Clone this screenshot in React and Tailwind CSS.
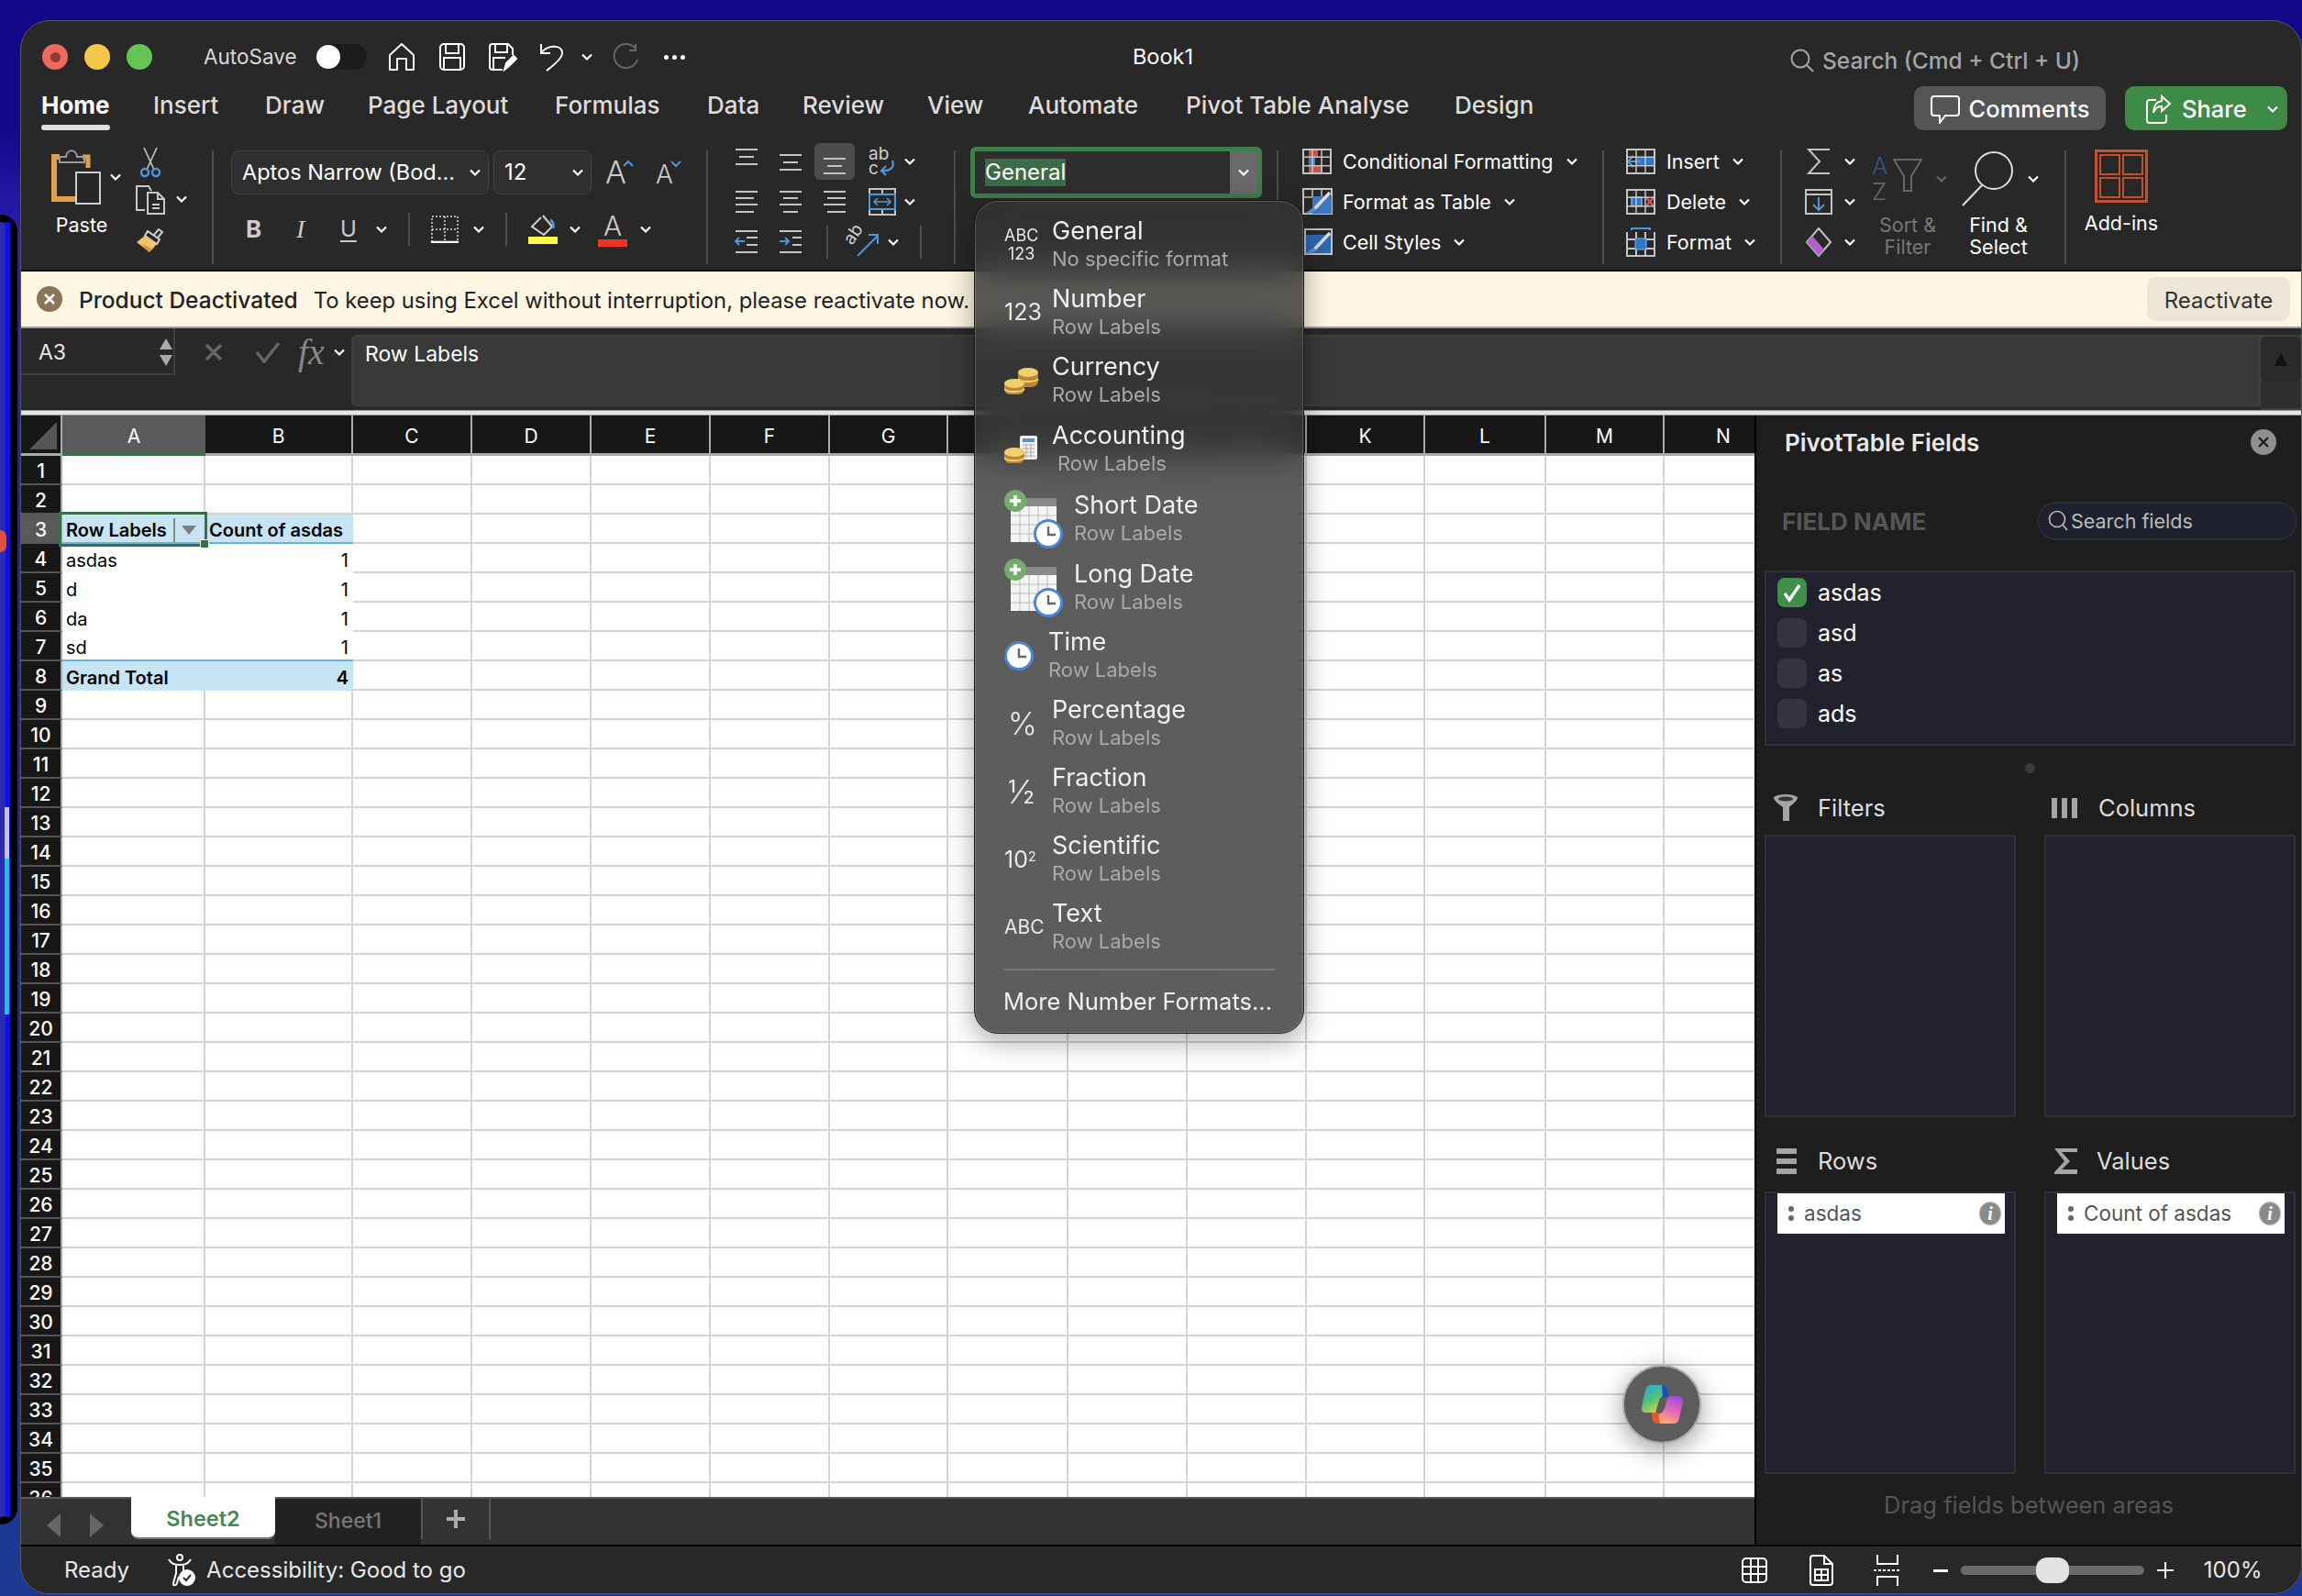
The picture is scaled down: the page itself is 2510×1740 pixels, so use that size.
import React from "react";

const Chev = ({ className = "text-white" }) => (
  <svg width="16" height="16" viewBox="0 0 16 16" className={`shrink-0 ${className}`}>
    <path d="M3 5.5 8 10.5 13 5.5" fill="none" stroke="currentColor" strokeWidth="2.2" />
  </svg>
);

const G = "#c4c4c4";
const B = "#4f97d8";

const Lines = ({ rows, hl }) => (
  <svg width="28" height="28" viewBox="0 0 28 28">
    {rows.map(([x1, x2, y], i) => (
      <line key={i} x1={x1} x2={x2} y1={y} y2={y} stroke={G} strokeWidth="2" />
    ))}
    {hl}
  </svg>
);

const Home = () => (
  <svg width="30" height="30" viewBox="0 0 30 30" fill="none" stroke="#fff" strokeWidth="2">
    <path d="M2 29V13L15 1l13 12v16h-8V17H10v12z" strokeLinejoin="round" />
  </svg>
);
const Save = () => (
  <svg width="30" height="30" viewBox="0 0 30 30" fill="none" stroke="#fff" strokeWidth="2">
    <rect x="2" y="1" width="26" height="28" rx="4" />
    <path d="M8 1v10h14V1M6 29V16h18v13" />
  </svg>
);
const SaveAs = () => (
  <svg width="32" height="32" viewBox="0 0 32 32" fill="none" stroke="#fff" strokeWidth="2">
    <path d="M16 30H5a3 3 0 0 1-3-3V5a3 3 0 0 1 3-3h17l5 5v7" />
    <path d="M8 2v9h13V2M6 30V17h13" />
    <path d="M18 30l2-7 8-8 3 3-8 8z" fill="#fff" />
  </svg>
);
const Undo = () => (
  <svg width="28" height="32" viewBox="0 0 28 32" fill="none" stroke="#fff" strokeWidth="2">
    <path d="M2 2v10h10M2 12C8 3 24 2 25 11c1 7-12 16-17 20" />
  </svg>
);
const Redo = () => (
  <svg width="30" height="30" viewBox="0 0 30 30" fill="none" stroke="#666" strokeWidth="2">
    <path d="M24 5A13 13 0 1 0 27 18M25 1v7h-7" />
  </svg>
);

const PasteIcon = () => (
  <svg width="54" height="60" viewBox="0 0 54 60" fill="none">
    <path d="M9 8H3v46h25" stroke="#e0a047" strokeWidth="6" />
    <path d="M34 8h6v12" stroke="#e0a047" strokeWidth="5" />
    <path d="M9 14V8h7c1-9 11-9 12 0h8v6z" stroke="#9a9a9a" strokeWidth="2" />
    <rect x="27" y="25" width="26" height="34" stroke="#cfcfcf" strokeWidth="2" fill="#272727" />
  </svg>
);
const Cut = () => (
  <svg width="22" height="34" viewBox="0 0 22 34" fill="none">
    <path d="M4 1l11 24M18 1L7 25" stroke="#bcbcbc" strokeWidth="1.8" />
    <circle cx="5" cy="28" r="4" stroke={B} strokeWidth="2.4" />
    <circle cx="17" cy="28" r="4" stroke={B} strokeWidth="2.4" />
  </svg>
);
const Copy = () => (
  <svg width="32" height="32" viewBox="0 0 32 32" fill="none" stroke="#c9c9c9" strokeWidth="2">
    <path d="M10 27H1V1h13l3 5" />
    <path d="M13 8h11l7 7v16H13z" fill="#272727" />
    <path d="M24 8v7h7M18 21h8M18 25h8" />
  </svg>
);
const Painter = () => (
  <svg width="32" height="32" viewBox="0 0 32 32" fill="none">
    <path d="M20 11l5-6 4 3-5 6" stroke="#cfcfcf" strokeWidth="2" />
    <path d="M13 7l13 9-3 5-13-9z" stroke="#cfcfcf" strokeWidth="2" />
    <path d="M10 12l13 9-8 9L1 19z" fill="#f0c567" />
    <path d="M5 20l12 6-2 4z" fill="#d8913a" />
  </svg>
);
const BorderIcon = () => (
  <svg width="30" height="30" viewBox="0 0 30 30" fill="none">
    <rect x="1" y="1" width="28" height="28" stroke="#ddd" strokeWidth="1.5" strokeDasharray="2 2" />
    <path d="M15 1v28M1 15h28" stroke="#ddd" strokeWidth="1.5" strokeDasharray="2 2" />
    <path d="M0 29h30" stroke="#fff" strokeWidth="2.5" />
  </svg>
);
const Fill = () => (
  <svg width="32" height="32" viewBox="0 0 32 32" fill="none">
    <path d="M16 2l10 12-9 9L4 14l10-10" stroke="#cfcfcf" strokeWidth="2" transform="translate(0 -1)" />
    <path d="M24 6c3 1 4 5 3 9" stroke={B} strokeWidth="3" />
    <rect y="24" width="32" height="8" fill="#fdfb47" />
  </svg>
);
const WrapIcon = () => (
  <svg width="30" height="32" viewBox="0 0 30 32" fill="none" className="overflow-visible">
    <text x="0" y="14" fontSize="19" fill="#cfcfcf" fontFamily="Inter">ab</text>
    <text x="0" y="30" fontSize="19" fill="#cfcfcf" fontFamily="Inter">c</text>
    <path d="M26 15c3 8-3 12-12 11M19 21l-5 5 5 5" stroke={B} strokeWidth="2.2" />
  </svg>
);
const MergeIcon = () => (
  <svg width="30" height="30" viewBox="0 0 30 30" fill="none">
    <rect x="1" y="1" width="28" height="28" stroke={G} strokeWidth="2" />
    <path d="M15 1v28" stroke={G} strokeWidth="2" />
    <rect x="1" y="7" width="28" height="16" stroke={B} strokeWidth="2" fill="#272727" />
    <path d="M6 15h18M10 11l-4 4 4 4M20 11l4 4-4 4" stroke={B} strokeWidth="1.6" />
  </svg>
);
const Orient = () => (
  <svg width="34" height="32" viewBox="0 0 34 32" fill="none" className="overflow-visible">
    <text x="0" y="0" fontSize="19" fill="#cfcfcf" fontFamily="Inter" transform="translate(4 20) rotate(-55)">ab</text>
    <path d="M10 31L32 9M22 8h10v10" stroke={B} strokeWidth="2" />
  </svg>
);
const SheetGrid = ({ children, w = 32, h = 28 }) => (
  <svg width={w} height={h} viewBox={`0 0 ${w} ${h}`} fill="none" className="shrink-0">
    {children}
    <rect x="1" y="1" width={w - 2} height={h - 2} stroke={G} strokeWidth="2" />
    <path d={`M11 1V${h - 1}M21 1V${h - 1}M1 ${h / 3}H${w - 1}M1 ${(2 * h) / 3}H${w - 1}`} stroke={G} strokeWidth="1.5" />
  </svg>
);
const CondIcon = () => (
  <SheetGrid>
    <rect x="7" y="1" width="10" height="8" fill="#c9504b" />
    <rect x="7" y="9" width="7" height="10" fill="#3d80c4" />
    <rect x="7" y="19" width="15" height="8" fill="#c9504b" />
  </SheetGrid>
);
const Brush = () => (
  <g>
    <path d="M12 24L30 5" stroke="#ddd" strokeWidth="3.5" />
    <path d="M13 21c-4 1-6 5-10 6 4 1 10 0 12-3z" fill={B} />
  </g>
);
const TableIcon = () => (
  <svg width="34" height="30" viewBox="0 0 34 30" fill="none" className="shrink-0">
    <rect x="1" y="1" width="31" height="27" stroke={G} strokeWidth="2" />
    <path d="M11 1v9M21 1v9M1 10h31" stroke={G} strokeWidth="1.5" />
    <rect x="11" y="9" width="21" height="19" fill="#3f78c2" />
    <Brush />
  </svg>
);
const StyleIcon = () => (
  <svg width="34" height="30" viewBox="0 0 34 30" fill="none" className="shrink-0">
    <rect x="3" y="1" width="29" height="27" stroke={G} strokeWidth="2" />
    <rect x="4" y="7" width="27" height="20" fill="#2f69b5" />
    <Brush />
  </svg>
);
const InsertCell = () => (
  <SheetGrid>
    <rect x="11" y="9" width="21" height="10" fill="#2f78c8" />
    <path d="M16 14H2M8 8l-6 6 6 6" stroke={B} strokeWidth="2.2" />
  </SheetGrid>
);
const DeleteCell = () => (
  <SheetGrid>
    <rect x="6" y="9" width="11" height="10" fill="#2f78c8" stroke="#7fb4e6" strokeWidth="1.5" />
    <path d="M21 8l10 12M31 8L21 20" stroke="#d9534f" strokeWidth="2.4" />
  </SheetGrid>
);
const FormatCell = () => (
  <svg width="32" height="32" viewBox="0 0 32 32" fill="none" className="shrink-0">
    <path d="M6 1h20M6 0v3M26 0v3" stroke={B} strokeWidth="2" />
    <path d="M1 5v26h30V5M11 5v26M21 5v26M1 13h30M1 23h30" stroke={G} strokeWidth="2" />
    <rect x="10" y="12" width="12" height="12" fill="#2f78c8" stroke="#7fb4e6" />
  </svg>
);
const SumIcon = () => (
  <svg width="26" height="28" viewBox="0 0 26 28" fill="none">
    <path d="M25 1H2l12 13L2 27h23" stroke={G} strokeWidth="2" />
  </svg>
);
const FillDown = () => (
  <svg width="30" height="28" viewBox="0 0 30 28" fill="none">
    <rect x="1" y="1" width="28" height="26" stroke={G} strokeWidth="2" />
    <path d="M1 6h28" stroke={G} strokeWidth="2" />
    <path d="M15 9v14M9 17l6 6 6-6" stroke={B} strokeWidth="2" />
  </svg>
);
const Eraser = () => (
  <svg width="30" height="32" viewBox="0 0 30 32" fill="none">
    <path d="M15 1l13 15-13 15L2 16z" stroke={G} strokeWidth="2" />
    <path d="M8 9l13 15-6 7L2 16z" fill="#b062c4" />
  </svg>
);
const SortIcon = () => (
  <svg width="56" height="54" viewBox="0 0 56 54" fill="none" className="overflow-visible">
    <text x="0" y="22" fontSize="26" fill="#34567e" fontFamily="Inter" fontWeight="300">A</text>
    <text x="0" y="50" fontSize="26" fill="#666" fontFamily="Inter" fontWeight="300">Z</text>
    <path d="M24 6h30L43 24v16h-8V24z" stroke="#666" strokeWidth="2" />
  </svg>
);
const FindIcon = () => (
  <svg width="56" height="60" viewBox="0 0 56 60" fill="none" className="shrink-0">
    <circle cx="35" cy="21" r="20" stroke="#ddd" strokeWidth="2" />
    <path d="M22 37L1 59" stroke="#ddd" strokeWidth="2" />
  </svg>
);
const AddIns = () => (
  <svg width="58" height="58" viewBox="0 0 58 58" fill="none" className="shrink-0">
    <rect x="1.5" y="1.5" width="55" height="55" stroke="#c4502c" strokeWidth="3" />
    <path d="M6 6h21v21H6zM31 6h21v21H31zM6 31h21v21H6zM31 31h21v21H31z" stroke="#c4502c" strokeWidth="2" />
  </svg>
);
const CommentIcon = () => (
  <svg width="32" height="32" viewBox="0 0 32 32" fill="none" stroke="#fff" strokeWidth="2">
    <path d="M4 2h24a3 3 0 0 1 3 3v15a3 3 0 0 1-3 3H16l-6 8v-8H4a3 3 0 0 1-3-3V5a3 3 0 0 1 3-3z" />
  </svg>
);
const ShareIcon = () => (
  <svg width="30" height="32" viewBox="0 0 30 32" fill="none" stroke="#fff" strokeWidth="2">
    <path d="M12 6H5a3 3 0 0 0-3 3v19a3 3 0 0 0 3 3h15a3 3 0 0 0 3-3v-6" />
    <path d="M18 2l9 8-9 8v-5c-5 0-8 3-9 7 0-7 3-12 9-13z" />
  </svg>
);

const Sep = ({ className = "h-[124px] mt-[14px]" }) => <div className={`w-[2px] shrink-0 bg-[#4c4c4c] ${className}`} />;

const alignRows = [
  [
    [[2, 26, 1], [6, 22, 9], [2, 26, 17]],
    [[2, 26, 7], [6, 22, 15], [2, 26, 23]],
    [[2, 26, 11], [6, 22, 19], [2, 26, 27]],
  ],
  [
    [[2, 26, 3], [2, 22, 10], [2, 26, 17], [2, 22, 25]],
    [[2, 26, 3], [6, 22, 10], [2, 26, 17], [6, 22, 25]],
    [[2, 26, 3], [6, 26, 10], [2, 26, 17], [6, 26, 25]],
  ],
];

function Ribbon() {
  return (
    <div className="flex h-[144px] shrink-0">
      <div className="flex w-[208px] shrink-0 pt-[13px] pl-[33px]">
        <div className="flex w-[54px] flex-col items-center">
          <PasteIcon />
          <span className="ml-[12px] mt-[8px] whitespace-nowrap text-[21.5px] leading-[28px] text-white">Paste</span>
        </div>
        <div className="ml-[8px] mt-[22px]"><Chev /></div>
        <div className="ml-[14px] -mt-[3px] flex flex-col">
          <div className="flex h-[42px] w-[32px] justify-center"><Cut /></div>
          <div className="flex h-[43px] items-start"><Copy /><div className="ml-[10px] mt-[7px]"><Chev /></div></div>
          <Painter />
        </div>
      </div>
      <Sep />
      <div className="w-[537px] shrink-0 pl-[19px] pt-[14px]">
        <div className="flex h-[48px] items-center">
          <div className="flex h-[48px] w-[281px] items-center justify-between rounded-[8px] border border-[#444] bg-[#2f2f2f] pl-[11px] pr-[6px] text-[23.5px] text-white">
            <span className="whitespace-nowrap">Aptos Narrow (Bod...</span>
            <Chev />
          </div>
          <div className="ml-[5px] flex h-[48px] w-[107px] items-center justify-between rounded-[8px] border border-[#444] bg-[#2f2f2f] pl-[11px] pr-[6px] text-[24px] text-white">
            <span>12</span>
            <Chev />
          </div>
          <svg width="32" height="30" viewBox="0 0 32 30" className="ml-[15px] overflow-visible" fill="none">
            <text x="0" y="27" fontSize="34" fontWeight="300" fill="#ccc" fontFamily="Inter">A</text>
            <path d="M20 8l5-5 5 5" stroke={B} strokeWidth="2" />
          </svg>
          <svg width="28" height="30" viewBox="0 0 28 30" className="ml-[23px] overflow-visible" fill="none">
            <text x="0" y="27" fontSize="28" fontWeight="300" fill="#ccc" fontFamily="Inter">A</text>
            <path d="M17 3l5 5 5-5" stroke={B} strokeWidth="2" />
          </svg>
        </div>
        <div className="mt-[16px] flex h-[44px] items-center pl-[16px] text-[#ccc]">
          <span className="w-[55px] text-[26px] font-bold leading-none">B</span>
          <span className="w-[48px] font-['Liberation_Serif',serif] text-[28px] italic leading-none">I</span>
          <span className="w-[35px] text-[24px] leading-none underline underline-offset-4">U</span>
          <div className="ml-[2px]"><Chev /></div>
          <Sep className="ml-[21px] h-[36px]" />
          <div className="ml-[23px]"><BorderIcon /></div>
          <div className="ml-[14px]"><Chev /></div>
          <Sep className="ml-[21px] h-[36px]" />
          <div className="ml-[23px]"><Fill /></div>
          <div className="ml-[11px]"><Chev /></div>
          <div className="ml-[17px] flex w-[32px] flex-col items-center">
            <span className="text-[30px] font-light leading-[30px] text-[#ccc]">A</span>
            <div className="h-[8px] w-[32px] bg-[#ee3524]" />
          </div>
          <div className="ml-[12px]"><Chev /></div>
        </div>
      </div>
      <Sep />
      <div className="w-[268px] shrink-0 pl-[18px] pt-[4px]">
        {alignRows.map((cells, r) => (
          <div key={r} className="flex h-[44px] items-center">
            {cells.map((c, i) => (
              <div key={i} className="flex h-[44px] w-[48px] items-center justify-center">
                <div className={r === 0 && i === 2 ? "flex h-[40px] w-[44px] items-center justify-center rounded-[6px] bg-[#4c4c4c]" : "flex items-center"}>
                  <Lines rows={c} />
                </div>
              </div>
            ))}
            <div className="ml-[13px]">{r === 0 ? <WrapIcon /> : <MergeIcon />}</div>
            <div className="ml-[7px]"><Chev /></div>
          </div>
        ))}
        <div className="flex h-[44px] items-center">
          <div className="flex w-[48px] justify-center">
            <Lines rows={[[2, 26, 2], [14, 26, 9], [14, 26, 17], [2, 26, 25]]} hl={<path d="M12 13H2M6 9l-4 4 4 4" stroke={B} strokeWidth="2" fill="none" />} />
          </div>
          <div className="flex w-[48px] justify-center">
            <Lines rows={[[2, 26, 2], [16, 26, 9], [16, 26, 17], [2, 26, 25]]} hl={<path d="M2 13h10M8 9l4 4-4 4" stroke={B} strokeWidth="2" fill="none" />} />
          </div>
          <Sep className="ml-[15px] h-[36px]" />
          <div className="ml-[22px]"><Orient /></div>
          <div className="ml-[7px]"><Chev /></div>
          <Sep className="ml-[21px] h-[36px]" />
        </div>
      </div>
      <Sep />
      <div className="w-[350px] shrink-0 pl-[16px] pt-[10px]">
        <div className="flex h-[56px] w-[318px] items-center rounded-[6px] border-[5px] border-[#3f7d4a] bg-[#2e2e2e] pl-[11px]">
          <span className="bg-[#3d6b4a] text-[24px] leading-[30px] text-white">General</span>
          <div className="ml-auto flex h-full w-[30px] items-center justify-center bg-[#6a6a6a]"><Chev /></div>
        </div>
      </div>
      <Sep />
      <div className="w-[353px] shrink-0 pl-[26px] pt-[4px] text-[21.5px] text-white">
        <div className="flex h-[44px] items-center"><div className="w-[32px]"><CondIcon /></div><span className="ml-[12px] whitespace-nowrap">Conditional Formatting</span><div className="ml-[12px]"><Chev /></div></div>
        <div className="flex h-[44px] items-center"><div className="w-[32px]"><TableIcon /></div><span className="ml-[12px] whitespace-nowrap">Format as Table</span><div className="ml-[12px]"><Chev /></div></div>
        <div className="flex h-[44px] items-center"><div className="w-[32px]"><StyleIcon /></div><span className="ml-[12px] whitespace-nowrap">Cell Styles</span><div className="ml-[12px]"><Chev /></div></div>
      </div>
      <Sep />
      <div className="w-[192px] shrink-0 pl-[24px] pt-[4px] text-[21.5px] text-white">
        <div className="flex h-[44px] items-center"><InsertCell /><span className="ml-[12px]">Insert</span><div className="ml-[12px]"><Chev /></div></div>
        <div className="flex h-[44px] items-center"><DeleteCell /><span className="ml-[12px]">Delete</span><div className="ml-[12px]"><Chev /></div></div>
        <div className="flex h-[44px] items-center"><FormatCell /><span className="ml-[12px]">Format</span><div className="ml-[12px]"><Chev /></div></div>
      </div>
      <Sep />
      <div className="flex w-[308px] shrink-0">
        <div className="ml-[25px] pt-[4px]">
          <div className="flex h-[44px] items-center"><div className="flex w-[30px] justify-center"><SumIcon /></div><div className="ml-[11px]"><Chev /></div></div>
          <div className="flex h-[44px] items-center"><FillDown /><div className="ml-[11px]"><Chev /></div></div>
          <div className="flex h-[44px] items-center"><Eraser /><div className="ml-[11px]"><Chev /></div></div>
        </div>
        <div className="ml-[10px] flex w-[90px] shrink-0 flex-col pt-[14px]">
          <div className="flex h-[62px] items-center pl-[6px]"><SortIcon /><div className="ml-[12px]"><Chev className="text-[#666]" /></div></div>
          <div className="mt-[7px] text-center text-[21.5px] leading-[24px] text-[#777]">Sort &<br />Filter</div>
        </div>
        <div className="ml-[14px] flex w-[80px] shrink-0 flex-col pt-[14px]">
          <div className="flex h-[62px] items-center"><FindIcon /><div className="ml-[14px]"><Chev /></div></div>
          <div className="mt-[7px] text-center text-[21.5px] leading-[24px] text-white">Find &<br />Select</div>
        </div>
      </div>
      <Sep />
      <div className="ml-[20px] flex w-[80px] shrink-0 flex-col items-center pt-[13px]">
        <AddIns />
        <span className="mt-[10px] whitespace-nowrap text-[21.5px] leading-[24px] text-white">Add-ins</span>
      </div>
    </div>
  );
}

const tabs = [
  ["Home", "w-[122px]"],
  ["Insert", "w-[122px]"],
  ["Draw", "w-[112px]"],
  ["Page Layout", "w-[204px]"],
  ["Formulas", "w-[166px]"],
  ["Data", "w-[104px]"],
  ["Review", "w-[136px]"],
  ["View", "w-[110px]"],
  ["Automate", "w-[172px]"],
  ["Pivot Table Analyse", "w-[293px]"],
  ["Design", "w-[120px]"],
];

const colW = ["w-[156px]", "w-[161px]", "w-[130px]", "w-[130px]", "w-[130px]", "w-[130px]", "w-[129px]", "w-[131px]", "w-[130px]", "w-[130px]", "w-[129px]", "w-[132px]", "w-[129px]", "w-[130px]"];
const colN = "ABCDEFGHIJKLMN".split("");

const pivot = {
  3: ["Row Labels", "Count of asdas"],
  4: ["asdas", "1"],
  5: ["d", "1"],
  6: ["da", "1"],
  7: ["sd", "1"],
  8: ["Grand Total", "4"],
};

function Sheet() {
  const rows = Array.from({ length: 36 }, (_, i) => i + 1);
  return (
    <div className="relative h-[1179px] overflow-hidden bg-white">
      <div className="flex h-[44px] bg-[#171717]">
        <div className="flex w-[45px] shrink-0 items-end justify-end border-r-2 border-b-[3px] border-[#aaa] pb-[4px] pr-[4px]">
          <svg width="30" height="30" viewBox="0 0 30 30"><path d="M30 0V30H0z" fill="#555" /></svg>
        </div>
        {colN.map((c, i) => (
          <div key={c} className={`flex shrink-0 items-center justify-center pt-[4px] text-[21px] text-white ${colW[i]} ${i === 0 ? "border-b-[3px] border-[#3a7048] bg-[#5a5a5a]" : "border-b-[3px] border-r-2 border-[#aaa]"}`}>{c}</div>
        ))}
      </div>
      {rows.map((r) => (
        <div key={r} className="flex h-[32px]">
          <div className={`flex w-[45px] shrink-0 items-center justify-center border-b-2 border-r-2 border-b-[#555] border-r-[#aaa] pt-[3px] text-[21px] font-medium text-white ${r === 3 ? "bg-[#5a5a5a]" : "bg-[#171717]"}`}>{r}</div>
          {colN.map((c, i) => {
            const v = i < 2 && pivot[r] ? pivot[r][i] : null;
            const head = r === 3 || r === 8;
            const inPivot = i < 2 && pivot[r];
            return (
              <div
                key={c}
                className={`flex shrink-0 items-center overflow-hidden whitespace-nowrap pt-[3px] text-[20px] leading-none text-black ${colW[i]} ${i === 0 ? "pl-[4px]" : i === 1 && r !== 3 ? "justify-end pr-[5px]" : "pl-[4px]"} ${head && inPivot ? "bg-[#c7e4f3] font-semibold" : ""} ${r === 3 && inPivot ? "border-b-2 border-[#66b3e0]" : r === 7 && inPivot ? "border-b-2 border-[#66b3e0]" : inPivot ? "" : "border-b-2 border-r-2 border-[#d4d4d4]"}`}
              >
                {v}
                {r === 3 && i === 0 && (
                  <span className="ml-[7px] flex h-[26px] items-center border-l-2 border-[#888] pl-[6px]">
                    <svg width="18" height="12" viewBox="0 0 18 12"><path d="M1 1h16L9 11z" fill="#808080" /></svg>
                  </span>
                )}
              </div>
            );
          })}
        </div>
      ))}
      <div className="absolute left-[41px] top-[105px] h-[38px] w-[162px] border-[3px] border-[#3a7048]" />
      <div className="absolute left-[195px] top-[135px] h-[10px] w-[10px] border border-white bg-[#3a7048]" />
      <div className="absolute left-[1746px] top-[1035px] flex h-[86px] w-[86px] items-center justify-center rounded-full border-2 border-[#aaa] bg-[#5c5c5c] shadow-[0_6px_28px_rgba(0,0,0,0.4)]">
        <svg width="46" height="42" viewBox="0 0 46 42">
          <defs>
            <linearGradient id="cA" x1="0" y1="0" x2="0.6" y2="1">
              <stop offset="0" stopColor="#2aa3ee" />
              <stop offset="0.55" stopColor="#4cc37b" />
              <stop offset="1" stopColor="#f0d433" />
            </linearGradient>
            <linearGradient id="cB" x1="0.7" y1="0" x2="0.3" y2="1">
              <stop offset="0" stopColor="#a04bdd" />
              <stop offset="0.5" stopColor="#e667b8" />
              <stop offset="1" stopColor="#fbb46a" />
            </linearGradient>
          </defs>
          <path d="M11 0h12c5 0 6 3 7 8l-5 3c-3 1-5 4-6 9l-3 10H5c-3 0-5-2-4-6l4-18c1-4 3-6 6-6z" fill="url(#cA)" />
          <path d="M23 0c4 0 6 2 7 8l1 4-7 2z" fill="#1b4fc4" />
          <path d="M35 12h6c3 0 5 2 5 6l-4 18c-1 4-3 6-6 6H23c-4 0-6-3-7-8l5-3c3-1 5-4 6-9l2-7c1-2 3-3 6-3z" fill="url(#cB)" />
          <path d="M12 30h7l2 12h-4c-4 0-5-7-5-12z" fill="#e6552e" />
        </svg>
      </div>
    </div>
  );
}

const Coins = ({ calc }) => (
  <svg width="38" height="32" viewBox="0 0 38 32" className="shrink-0">
    {calc ? (
      <g>
        <rect x="17" y="1" width="19" height="26" rx="2" fill="#f1f1f1" />
        <rect x="20" y="4" width="13" height="4" fill="#5c8fd1" />
        <path d="M20 11h13M20 15h13M20 19h13M20 23h13M24 10v15M29 10v15" stroke="#aaa" strokeWidth="1" />
      </g>
    ) : (
      <g>
        <rect x="15" y="3" width="22" height="20" rx="7" fill="#b8873a" />
        <ellipse cx="26" cy="7" rx="11" ry="5" fill="#f3cf6b" />
        <path d="M15 14c3 4 19 4 22 0" stroke="#f3cf6b" strokeWidth="2" fill="none" />
      </g>
    )}
    <rect x="0" y="15" width="22" height="16" rx="6" fill="#b8873a" />
    <ellipse cx="11" cy="19" rx="11" ry="5" fill="#f3cf6b" />
    <path d="M0 25c3 4 19 4 22 0" stroke="#f3cf6b" strokeWidth="2" fill="none" />
  </svg>
);
const ClockG = () => (
  <g>
    <circle cx="16" cy="16" r="14.5" fill="#fff" stroke="#4a86d6" strokeWidth="3" />
    <path d="M16 8v9h8" stroke="#666" strokeWidth="2.4" fill="none" />
  </g>
);
const ClockIcon = () => <svg width="32" height="32" viewBox="0 0 32 32" className="shrink-0"><ClockG /></svg>;
const DateIcon = () => (
  <svg width="64" height="64" viewBox="0 0 64 64" className="shrink-0">
    <rect x="7" y="9" width="50" height="48" fill="#f4f4f4" />
    <rect x="7" y="9" width="50" height="9" fill="#8a8a8a" />
    <path d="M7 28h50M7 38h50M7 48h50M17 18v39M27 18v39M37 18v39M47 18v39" stroke="#bbb" strokeWidth="1" />
    <circle cx="12" cy="12" r="12" fill="#74ad6b" />
    <path d="M12 6v12M6 12h12" stroke="#fff" strokeWidth="3.5" />
    <g transform="translate(32 32)"><ClockG /></g>
  </svg>
);

const menu = [
  { t: "General", s: "No specific format", h: "h-[74px]", w: "w-[52px]", icon: <div className="text-center text-[18px] leading-[20px] text-[#e8e8e8]">ABC<br />123</div> },
  { t: "Number", s: "Row Labels", h: "h-[74px]", w: "w-[52px]", icon: <span className="text-[25px] text-[#e8e8e8]">123</span> },
  { t: "Currency", s: "Row Labels", h: "h-[74px]", w: "w-[52px]", icon: <Coins /> },
  { t: "Accounting", s: "Row Labels", h: "h-[76px]", w: "w-[52px]", icon: <Coins calc />, sc: "pl-[6px]" },
  { t: "Short Date", s: "Row Labels", h: "h-[76px]", w: "w-[76px]", icon: <DateIcon /> },
  { t: "Long Date", s: "Row Labels", h: "h-[74px]", w: "w-[76px]", icon: <DateIcon /> },
  { t: "Time", s: "Row Labels", h: "h-[74px]", w: "w-[48px]", icon: <ClockIcon /> },
  { t: "Percentage", s: "Row Labels", h: "h-[74px]", w: "w-[52px]", icon: <span className="pl-[4px] text-[34px] font-light leading-none text-[#e8e8e8]">%</span> },
  { t: "Fraction", s: "Row Labels", h: "h-[74px]", w: "w-[52px]", icon: <span className="pl-[4px] text-[36px] font-light leading-none text-[#e8e8e8]">½</span> },
  { t: "Scientific", s: "Row Labels", h: "h-[74px]", w: "w-[52px]", icon: <span className="text-[25px] leading-none text-[#e8e8e8]">10<sup className="text-[14px]">2</sup></span> },
  { t: "Text", s: "Row Labels", h: "h-[74px]", w: "w-[52px]", icon: <span className="text-[21px] text-[#e8e8e8]">ABC</span> },
];

function Dropdown() {
  return (
    <div className="absolute left-[1039px] top-[195px] w-[360px] rounded-[26px] border border-[#1a1a1a] bg-[#343434]/80 px-[32px] pt-[11px] shadow-[0_8px_30px_rgba(0,0,0,0.35),inset_0_0_0_1px_rgba(255,255,255,0.18)] backdrop-blur-[20px]">
      {menu.map((m) => (
        <div key={m.t} className={`flex items-center ${m.h}`}>
          <div className={`flex shrink-0 items-center ${m.w}`}>{m.icon}</div>
          <div className="flex flex-col">
            <span className="whitespace-nowrap text-[27px] leading-[30px] text-[#f0f0f0]">{m.t}</span>
            <span className={`whitespace-nowrap text-[22px] leading-[30px] text-[#a9a9a9] ${m.sc || ""}`}>{m.s}</span>
          </div>
        </div>
      ))}
      <div className="mt-[8px] h-[2px] w-[296px] bg-[#777]" />
      <div className="-ml-[1px] flex h-[68px] items-center whitespace-nowrap text-[25.5px] text-[#f0f0f0]">More Number Formats...</div>
    </div>
  );
}

const Box = ({ chip }) => (
  <div className="h-[308px] border-2 border-[#2f303a] bg-[#21222e]">
    {chip && (
      <div className="ml-[12px] flex h-[44px] w-[248px] items-center bg-white pl-[12px] pr-[4px] text-[22.5px] text-[#555]">
        <span className="flex flex-col gap-[4px]"><i className="block h-[6px] w-[6px] rounded-full bg-[#666]" /><i className="block h-[6px] w-[6px] rounded-full bg-[#666]" /></span>
        <span className="ml-[11px] whitespace-nowrap">{chip}</span>
        <span className="ml-auto flex h-[26px] w-[24px] items-center justify-center rounded-full border border-[#bbb] bg-[#8a8a8a] font-['Liberation_Serif',serif] text-[20px] font-bold italic text-white">i</span>
      </div>
    )}
  </div>
);

function Panel() {
  const fields = ["asdas", "asd", "as", "ads"];
  return (
    <div className="flex-1 border-l-2 border-black bg-[#1e1e1e]">
      <div className="flex h-[58px] items-center pl-[31px] pr-[27px]">
        <span className="text-[26px] font-semibold text-[#e8e8e8]">PivotTable Fields</span>
        <span className="ml-auto flex h-[28px] w-[28px] items-center justify-center rounded-full bg-[#8f8f8f]">
          <svg width="14" height="14" viewBox="0 0 14 14"><path d="M2 2l10 10M12 2L2 12" stroke="#1e1e1e" strokeWidth="2.4" /></svg>
        </span>
      </div>
      <div className="mt-[36px] flex h-[42px] items-center pl-[28px] pr-[4px]">
        <span className="text-[26px] font-bold text-[#555]">FIELD NAME</span>
        <div className="ml-auto flex h-[42px] w-[284px] items-center rounded-full border-2 border-[#2a2b36] bg-[#20212e] pl-[10px] text-[21.5px] text-[#bbb]">
          <svg width="22" height="24" viewBox="0 0 22 24" fill="none" stroke="#bbb" strokeWidth="1.6"><circle cx="10" cy="10" r="8.5" /><path d="M16 16l5 6" /></svg>
          <span className="ml-[3px]">Search fields</span>
        </div>
      </div>
      <div className="ml-[9px] mt-[33px] h-[191px] w-[579px] border-2 border-[#2f303a] bg-[#21222e] pl-[12px]">
        {fields.map((f, i) => (
          <div key={f} className="flex h-[44px] items-center text-[25px] text-white">
            <span className={`flex h-[32px] w-[32px] items-center justify-center rounded-[8px] ${i === 0 ? "bg-[#3f8f4b]" : "bg-[#33343f]"}`}>
              {i === 0 && <svg width="22" height="22" viewBox="0 0 22 22"><path d="M3 12l5 7L19 3" fill="none" stroke="#fff" strokeWidth="3.4" /></svg>}
            </span>
            <span className="ml-[12px] leading-none">{f}</span>
          </div>
        ))}
      </div>
      <div className="mt-[19px] flex justify-center">
        <div className="ml-[2px] h-[11px] w-[11px] rounded-full bg-[#3a3a3a]" />
      </div>
      <div className="ml-[9px] mt-[23px] grid w-[579px] grid-cols-[274px_274px] gap-x-[31px]">
        <div className="flex h-[30px] items-center text-[25.5px] text-[#ddd]">
          <svg width="28" height="30" viewBox="0 0 28 30" className="ml-[9px]"><path d="M1 3c6-4 20-4 26 0 1 3-7 9-9 11v15h-7V14C8 12 0 6 1 3z" fill="#a5a5a5" /><ellipse cx="14" cy="5" rx="8" ry="2.5" fill="#333" /></svg>
          <span className="ml-[21px]">Filters</span>
        </div>
        <div className="flex h-[30px] items-center text-[25.5px] text-[#ddd]">
          <svg width="28" height="22" viewBox="0 0 28 22" className="ml-[8px]"><path d="M0 0h6v22H0zM11 0h6v22h-6zM22 0h6v22h-6z" fill="#a5a5a5" /></svg>
          <span className="ml-[23px]">Columns</span>
        </div>
        <div className="mt-[14px]"><Box /></div>
        <div className="mt-[14px]"><Box /></div>
        <div className="mt-[33px] flex h-[30px] items-center text-[25.5px] text-[#ddd]">
          <svg width="22" height="28" viewBox="0 0 22 28" className="ml-[13px]"><path d="M0 0h22v6H0zM0 11h22v6H0zM0 22h22v6H0z" fill="#a5a5a5" /></svg>
          <span className="ml-[23px]">Rows</span>
        </div>
        <div className="mt-[33px] flex h-[30px] items-center text-[25.5px] text-[#ddd]">
          <svg width="28" height="30" viewBox="0 0 28 30" className="ml-[9px]"><path d="M27 5V1H2l11 14L2 27v2h25v-5H10l9-9-9-10z" fill="#a5a5a5" /></svg>
          <span className="ml-[20px]">Values</span>
        </div>
        <div className="mt-[18px]"><Box chip="asdas" /></div>
        <div className="mt-[18px]"><Box chip="Count of asdas" /></div>
      </div>
      <div className="mt-[20px] text-center text-[25.5px] leading-[28px] text-[#555]">Drag fields between areas</div>
    </div>
  );
}

export default function App() {
  return (
    <div className="relative h-[1740px] w-[2510px] overflow-hidden bg-[linear-gradient(180deg,#12098a_0,#12098a_140px,#2a1fb0_260px,#1a2a9c_1100px,#1c3a94_1740px)] font-['Inter',sans-serif]">
      <div className="absolute left-0 top-[234px] h-[1428px] w-[19px] rounded-r-[18px] border-y-[8px] border-r-[8px] border-black bg-[#2a2bb0]">
        <div className="ml-auto h-full w-[5px] bg-[#1010e6]" />
      </div>
      <div className="absolute left-0 top-[578px] h-[24px] w-[7px] rounded-r-full bg-[#e0503f]" />
      <div className="absolute left-[5px] top-[880px] h-[56px] w-[5px] bg-[#c8c8c8]" />
      <div className="absolute left-[5px] top-[936px] h-[170px] w-[5px] bg-[#00d4dc]" />

      <div className="relative ml-[22px] mt-[22px] inline-block h-[1716px] w-[2488px] overflow-hidden rounded-[32px] border border-[#5a5a5a] bg-[#282828] align-top">
        <div className="flex h-[1714px] flex-col">
          <div className="flex h-[67px] shrink-0 items-center pt-[11px]">
            <div className="flex w-[1167px] shrink-0 items-center">
              <span className="ml-[23px] flex h-[28px] w-[28px] items-center justify-center rounded-full bg-[#ee6a5f]"><i className="block h-[11px] w-[11px] rounded-full bg-[#8f3a33]" /></span>
              <span className="ml-[18px] h-[28px] w-[28px] rounded-full bg-[#f5c748]" />
              <span className="ml-[18px] h-[28px] w-[28px] rounded-full bg-[#62c554]" />
              <span className="ml-[56px] text-[22.5px] text-[#d8d8d8]">AutoSave</span>
              <span className="ml-[21px] flex h-[28px] w-[55px] items-center rounded-full bg-[#1c1c1c]"><i className="block h-[26px] w-[26px] rounded-full bg-white" /></span>
              <span className="ml-[23px]"><Home /></span>
              <span className="ml-[25px]"><Save /></span>
              <span className="ml-[24px]"><SaveAs /></span>
              <span className="ml-[24px]"><Undo /></span>
              <span className="ml-[16px]"><Chev /></span>
              <span className="ml-[20px]"><Redo /></span>
              <span className="ml-[26px] flex gap-[4px]"><i className="block h-[5px] w-[5px] rounded-full bg-white" /><i className="block h-[5px] w-[5px] rounded-full bg-white" /><i className="block h-[5px] w-[5px] rounded-full bg-white" /></span>
            </div>
            <div className="w-[156px] shrink-0 text-center text-[23.5px] text-white">Book1</div>
            <div className="ml-[606px] mt-[8px] flex items-center text-[24.5px] font-medium text-[#a5a5a5]">
              <svg width="26" height="26" viewBox="0 0 26 26" fill="none" stroke="#a5a5a5" strokeWidth="2"><circle cx="11" cy="11" r="9.5" /><path d="M18 18l7 7" /></svg>
              <span className="ml-[9px] whitespace-nowrap">Search (Cmd + Ctrl + U)</span>
            </div>
          </div>

          <div className="flex h-[60px] shrink-0 pl-[22px] pr-[15px]">
            {tabs.map(([t, w], i) => (
              <div key={t} className={`shrink-0 pt-[10px] ${w}`}>
                <div className={`w-fit whitespace-nowrap text-[26px] leading-[30px] ${i === 0 ? "font-bold text-white" : "font-medium text-[#dcdcdc]"}`}>{t}</div>
                {i === 0 && <div className="mt-[6px] h-[6px] w-[75px] rounded-full bg-[#e0e0e0]" />}
              </div>
            ))}
            <div className="ml-auto mt-[4px] flex h-[48px] w-[209px] shrink-0 items-center justify-center self-start rounded-[10px] bg-[#555] pt-[2px] text-[25.5px] font-medium text-white">
              <CommentIcon /><span className="ml-[10px]">Comments</span>
            </div>
            <div className="ml-[21px] mt-[4px] flex h-[48px] w-[177px] shrink-0 items-center justify-start self-start rounded-[10px] bg-[#3e8a47] pl-[22px] pt-[2px] text-[25.5px] font-medium text-white">
              <ShareIcon /><span className="ml-[10px]">Share</span><span className="ml-[20px]"><Chev /></span>
            </div>
          </div>

          <Ribbon />
          <div className="h-[2px] shrink-0 bg-black" />

          <div className="flex h-[60px] shrink-0 items-center bg-[#fdf6e3] pl-[17px] pr-[12px] text-[23.8px] text-[#222]">
            <span className="flex h-[28px] w-[28px] items-center justify-center rounded-full bg-[#8a7558]">
              <svg width="14" height="14" viewBox="0 0 14 14"><path d="M2 2l10 10M12 2L2 12" stroke="#fff" strokeWidth="2.6" /></svg>
            </span>
            <span className="ml-[18px] whitespace-nowrap pt-[3px] text-[24.5px] font-medium">Product Deactivated</span>
            <span className="ml-[17px] whitespace-nowrap pt-[3px]">To keep using Excel without interruption, please reactivate now.</span>
            <span className="ml-auto flex h-[48px] w-[156px] items-center justify-center rounded-[10px] bg-[#ece6d6] pt-[3px] text-[24px] text-[#333]">Reactivate</span>
          </div>
          <div className="h-[2px] shrink-0 bg-[#999]" />

          <div className="flex h-[89px] shrink-0 bg-[#282828]">
            <div className="flex h-[51px] w-[168px] shrink-0 items-center justify-between border-b-2 border-r-2 border-[#3e3e3e] pl-[19px] pr-[1px] pt-[3px] text-[23px] text-[#e8e8e8]">
              <span>A3</span>
              <span className="flex flex-col gap-[6px]">
                <svg width="14" height="12" viewBox="0 0 14 12"><path d="M7 0l7 12H0z" fill="#aaa" /></svg>
                <svg width="14" height="12" viewBox="0 0 14 12"><path d="M7 12L0 0h14z" fill="#aaa" /></svg>
              </span>
            </div>
            <div className="flex h-[51px] w-[192px] shrink-0 items-center text-[#777]">
              <svg width="20" height="20" viewBox="0 0 20 20" className="ml-[32px] shrink-0"><path d="M2 2l16 16M18 2L2 18" stroke="#666" strokeWidth="3.6" /></svg>
              <svg width="28" height="24" viewBox="0 0 28 24" className="ml-[35px] shrink-0"><path d="M2 12l8 10L26 2" fill="none" stroke="#666" strokeWidth="3.6" /></svg>
              <span className="ml-[19px] block w-[30px] shrink-0 font-['Liberation_Serif',serif] text-[40px] italic leading-none text-[#888]">fx</span>
              <span className="ml-[7px]"><Chev /></span>
            </div>
            <div className="mt-[7px] flex h-[78px] flex-1 rounded-l-[6px] border-2 border-[#3f3f3f] bg-[#393939] pl-[13px] pt-[3px] text-[23px] leading-[32px] text-white">
              Row Labels
            </div>
            <div className="mt-[7px] flex w-[44px] shrink-0 flex-col border-y-2 border-[#3f3f3f] bg-[#393939]">
              <div className="flex h-[50px] items-center justify-center rounded-[6px] bg-[#2a2a2a]">
                <svg width="14" height="14" viewBox="0 0 14 14"><path d="M7 0l7 14H0z" fill="#111" /></svg>
              </div>
              <div className="flex-1 bg-[#2e2e2e]" />
            </div>
          </div>
          <div className="h-[6px] shrink-0 border-y border-[#999] bg-[#e6e6e6]" />

          <div className="flex h-[1231px] shrink-0">
            <div className="flex w-[1890px] shrink-0 flex-col">
              <Sheet />
              <div className="flex h-[52px] border-t-2 border-[#555] bg-[#333]">
                <div className="flex w-[120px] shrink-0 items-start gap-[32px] pl-[28px] pt-[16px]">
                  <svg width="15" height="26" viewBox="0 0 15 26"><path d="M15 0v26L0 13z" fill="#666" /></svg>
                  <svg width="15" height="26" viewBox="0 0 15 26"><path d="M0 0v26l15-13z" fill="#666" /></svg>
                </div>
                <div className="-mt-[2px] flex h-[46px] w-[157px] shrink-0 items-center justify-center rounded-b-[8px] border-b-2 border-[#777] bg-white pt-[3px] text-[23.5px] font-semibold text-[#3e8a5a]">Sheet2</div>
                <div className="flex h-[50px] w-[159px] shrink-0 items-center justify-center bg-[#222] pb-[2px] text-[23px] font-medium text-[#777]">Sheet1</div>
                <div className="flex h-[44px] w-[76px] shrink-0 items-center justify-center border-x-2 border-[#555]">
                  <svg width="20" height="20" viewBox="0 0 20 20"><path d="M10 0v20M0 10h20" stroke="#aaa" strokeWidth="4" /></svg>
                </div>
              </div>
            </div>
            <Panel />
          </div>
          <div className="h-[2px] shrink-0 bg-black" />

          <div className="flex h-[51px] shrink-0 items-center bg-[#282828] pt-[1px] text-[24px] text-[#e8e8e8]">
            <span className="ml-[47px]">Ready</span>
            <svg width="32" height="36" viewBox="0 0 32 36" fill="none" className="ml-[41px]">
              <circle cx="14" cy="4" r="3" stroke="#fff" strokeWidth="2" />
              <path d="M2 6c3 5 6 6 12 6s9-1 12-6M10 13v8l-3 11c-1 3 3 3 4 0l2-7M18 13v6" stroke="#fff" strokeWidth="2" />
              <circle cx="22" cy="26" r="9" fill="#fff" />
              <path d="M18 26l3 3 5-6" stroke="#282828" strokeWidth="2" />
            </svg>
            <span className="ml-[11px]">Accessibility: Good to go</span>
            <svg width="28" height="28" viewBox="0 0 28 28" fill="none" stroke="#fff" strokeWidth="2" className="ml-[1391px]">
              <rect x="1" y="1" width="26" height="26" rx="4" /><path d="M10 1v26M18 1v26M1 10h26M1 18h26" />
            </svg>
            <svg width="26" height="34" viewBox="0 0 26 34" fill="none" stroke="#fff" strokeWidth="2" className="ml-[46px]">
              <path d="M4 1h12l9 9v20a3 3 0 0 1-3 3H4a3 3 0 0 1-3-3V4a3 3 0 0 1 3-3z" /><path d="M16 1v9h9" /><rect x="6" y="16" width="14" height="12" /><path d="M13 16v12M6 22h14" />
            </svg>
            <svg width="30" height="34" viewBox="0 0 30 34" fill="none" stroke="#fff" strokeWidth="2" className="ml-[44px]">
              <path d="M4 0v10h22V0M4 34V24h22v10" /><path d="M0 17h30" strokeDasharray="3 2" />
            </svg>
            <div className="ml-[35px] h-[3px] w-[16px] bg-white" />
            <div className="ml-[14px] flex h-[10px] w-[200px] items-center justify-center rounded-full bg-[#6a6a6a]">
              <div className="h-[28px] w-[36px] shrink-0 rounded-[12px] bg-[#e2e2e2]" />
            </div>
            <svg width="18" height="18" viewBox="0 0 18 18" className="ml-[14px]"><path d="M9 0v18M0 9h18" stroke="#fff" strokeWidth="2" /></svg>
            <span className="ml-[33px]">100%</span>
          </div>
        </div>
        <Dropdown />
      </div>
    </div>
  );
}
